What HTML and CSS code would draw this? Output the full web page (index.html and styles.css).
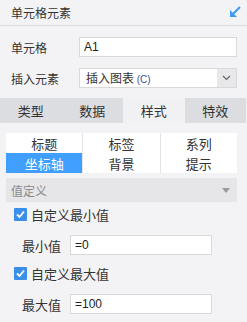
FILE: index.html
```html
<!DOCTYPE html>
<html>
  <head>
    <meta charset="utf-8">
    <link rel="stylesheet" href="styles.css">
  </head>
  <body>
    <div class="header">
      <span class="title">单元格元素</span>
      <svg class="collapse" width="12" height="12" viewBox="0 0 12 12">
        <line x1="11" y1="1" x2="3.5" y2="8.5" stroke="#3d9cf5" stroke-width="2.2"/>
        <polygon points="1,4 1,11 8,11" fill="#3d9cf5"/>
      </svg>
    </div>

    <div class="form">
      <div class="row">
        <label class="lbl">单元格</label>
        <div class="input">A1</div>
      </div>
      <div class="row">
        <label class="lbl">插入元素</label>
        <div class="select">
          <span class="select-text">插入图表 <span class="key">(C)</span></span>
          <span class="select-btn">
            <svg width="9" height="6" viewBox="0 0 9 6"><polyline points="1,1 4.5,4.5 8,1" fill="none" stroke="#666" stroke-width="1.2"/></svg>
          </span>
        </div>
      </div>
    </div>

    <div class="tabs">
      <div class="tab">类型</div>
      <div class="tab">数据</div>
      <div class="tab active">样式</div>
      <div class="tab">特效</div>
    </div>

    <div class="panel">
      <div class="subtabs">
        <div class="subtab">标题</div>
        <div class="subtab">标签</div>
        <div class="subtab">系列</div>
        <div class="subtab active">坐标轴</div>
        <div class="subtab">背景</div>
        <div class="subtab">提示</div>
      </div>

      <div class="section">
        <span>值定义</span>
        <span class="caret"></span>
      </div>

      <div class="check-row">
        <span class="checkbox">
          <svg width="13" height="13" viewBox="0 0 13 13"><polyline points="3,6.5 5.5,9 10,3.5" fill="none" stroke="#fff" stroke-width="1.8"/></svg>
        </span>
        <span>自定义最小值</span>
      </div>
      <div class="value-row">
        <label class="vlbl">最小值</label>
        <div class="input small">=0</div>
      </div>

      <div class="check-row second">
        <span class="checkbox">
          <svg width="13" height="13" viewBox="0 0 13 13"><polyline points="3,6.5 5.5,9 10,3.5" fill="none" stroke="#fff" stroke-width="1.8"/></svg>
        </span>
        <span>自定义最大值</span>
      </div>
      <div class="value-row">
        <label class="vlbl">最大值</label>
        <div class="input small">=100</div>
      </div>
    </div>
  </body>
</html>
```

FILE: styles.css
```css
html, body {
  margin: 0;
  padding: 0;
}
body {
  width: 247px;
  height: 322px;
  background: #f3f3f5;
  font-family: "Noto Sans CJK SC", "Liberation Sans", sans-serif;
  font-size: 12px;
  color: #333;
  overflow: hidden;
}
.header {
  height: 25px;
  border-bottom: 1px solid #dcdcde;
  display: flex;
  align-items: center;
  justify-content: space-between;
  padding: 0 6px 0 11px;
}
.title {
  font-size: 12px;
}
.collapse {
  display: block;
  margin-top: -2px;
}

.form {
  padding: 11px 10px 0 11px;
}
.row {
  display: flex;
  align-items: center;
  margin-bottom: 11px;
}
.lbl {
  width: 68px;
}
.input {
  flex: 1;
  height: 20px;
  box-sizing: border-box;
  background: #fff;
  border: 1px solid #d9d9d9;
  padding: 0 4px;
  line-height: 18px;
  font-family: "Liberation Sans", sans-serif;
  font-size: 12px;
  color: #222;
}
.select {
  flex: 1;
  height: 20px;
  box-sizing: border-box;
  background: #fff;
  border: 1px solid #d9d9d9;
  display: flex;
}
.select-text {
  flex: 1;
  padding-left: 6px;
  line-height: 18px;
}
.key {
  font-family: "Liberation Sans", sans-serif;
  font-size: 10px;
  color: #3b4b8f;
}
.select-btn {
  width: 19px;
  background: #e8e8ea;
  display: flex;
  align-items: center;
  justify-content: center;
}

.tabs {
  display: grid;
  grid-template-columns: repeat(4, 1fr);
  width: 246px;
  height: 25px;
  margin-top: -1px;
}
.tab {
  background: #dcdde0;
  display: flex;
  align-items: center;
  justify-content: center;
  font-size: 13px;
}
.tab.active {
  background: #f1f1f3;
}

.panel {
  padding: 10px 10px 0 6px;
}
.subtabs {
  display: grid;
  grid-template-columns: repeat(3, 1fr);
  grid-auto-rows: 20px;
  column-gap: 1px;
  background: #e4e4e6;
}
.subtab {
  background: #fff;
  display: flex;
  align-items: center;
  justify-content: center;
  font-size: 13px;
}
.subtab.active {
  background: #409eff;
  color: #fff;
}

.section {
  margin-top: 5px;
  height: 24px;
  background: #e6e6e8;
  color: #8a8a8a;
  display: flex;
  align-items: center;
  justify-content: space-between;
  padding: 0 7px 0 5px;
}
.caret {
  width: 0;
  height: 0;
  border-left: 4px solid transparent;
  border-right: 4px solid transparent;
  border-top: 5px solid #9a9a9a;
}

.check-row {
  display: flex;
  align-items: center;
  height: 20px;
  margin-top: 2px;
  padding-left: 8px;
  font-size: 13px;
}
.check-row.second {
  margin-top: 8px;
}
.checkbox {
  width: 13px;
  height: 13px;
  background: #3b8fe8;
  border-radius: 1px;
  margin-right: 4px;
  display: flex;
}
.value-row {
  display: flex;
  align-items: center;
  margin-top: 11px;
  padding-left: 16px;
}
.vlbl {
  width: 48px;
  font-size: 13px;
}
.input.small {
  flex: none;
  width: 142px;
}
```
